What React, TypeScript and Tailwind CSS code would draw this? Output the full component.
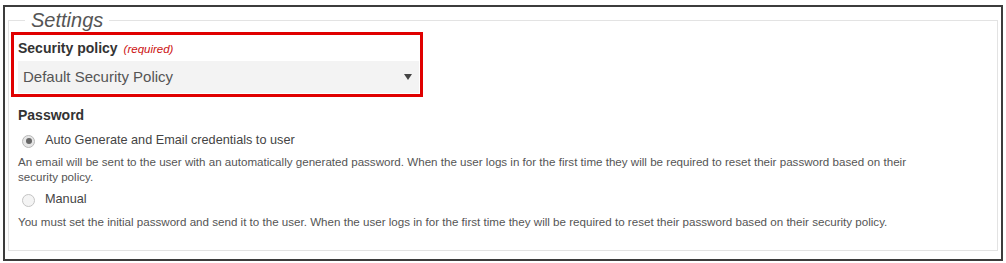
export default function App() {
  const font = { fontFamily: '"Liberation Sans", Arial, sans-serif' };
  return (
    <div className="w-[1006px] h-[263px] bg-white" style={font}>
      <div className="ml-[3px] mt-[5px] w-[1000px] h-[256px] border-2 border-[#3c3c3c] px-[3px] pt-[1px]">
        <fieldset className="border border-[#e3e3e3] h-[243px] pl-[2px] pr-[2px]">
          <legend className="ml-[14px] px-[6px] text-[20px] leading-[24px] italic text-[#555]">Settings</legend>
          <div className="w-[412px] h-[65px] border-[3px] border-[#e00000] pt-[4px] pl-[4px] pr-[1px] flex flex-col">
            <div className="h-[18px] leading-[18px] flex items-baseline">
              <span className="text-[14px] font-bold text-[#333]">Security policy</span>
              <span className="ml-[6px] text-[11.5px] italic text-[#cc1111]">(required)</span>
            </div>
            <div className="mt-[4px] h-[32px] bg-[#f3f3f3] flex items-center justify-between pl-[5px] pr-[7px]">
              <span className="text-[15px] text-[#555]">Default Security Policy</span>
              <svg width="8" height="6" viewBox="0 0 8 6"><path d="M0 0 L8 0 L4 6 Z" fill="#444" /></svg>
            </div>
          </div>
          <div className="pl-[7px]">
            <div className="mt-[8px] text-[14px] leading-[20px] font-bold text-[#333]">Password</div>
            <div className="mt-[7px] h-[18px] flex items-center">
              <span className="ml-[4px] w-[13px] h-[13px] rounded-full border border-[#b8b8b8] bg-[#e6e6e6] flex items-center justify-center">
                <span className="w-[6px] h-[6px] rounded-full bg-[#666]" />
              </span>
              <span className="ml-[10px] text-[12.7px] text-[#444]">Auto Generate and Email credentials to user</span>
            </div>
            <div className="mt-[4px] w-[915px] text-[11.6px] leading-[15px] text-[#555]">
              An email will be sent to the user with an automatically generated password. When the user logs in for the first time they will be required to reset their password based on their security policy.
            </div>
            <div className="mt-[7px] h-[18px] flex items-center">
              <span className="ml-[4px] w-[13px] h-[13px] rounded-full border border-[#c4c4c4] bg-[#f4f4f4]" />
              <span className="ml-[10px] text-[12.7px] text-[#444]">Manual</span>
            </div>
            <div className="mt-[5px] w-[915px] text-[11.6px] leading-[15px] text-[#555]">
              You must set the initial password and send it to the user. When the user logs in for the first time they will be required to reset their password based on their security policy.
            </div>
          </div>
        </fieldset>
      </div>
    </div>
  );
}
